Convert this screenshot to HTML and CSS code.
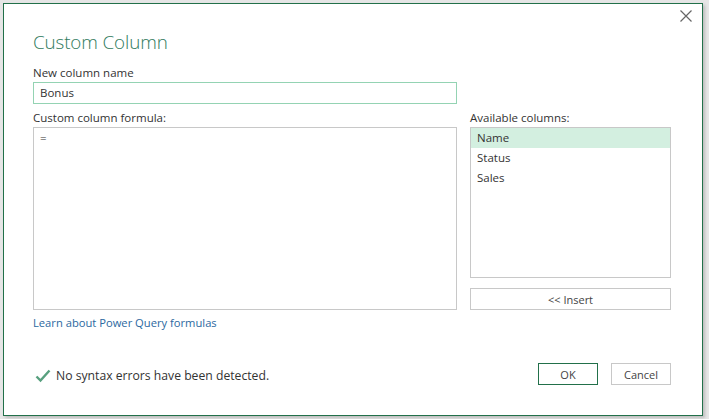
FILE: index.html
```html
<!DOCTYPE html>
<html>
<head>
<meta charset="utf-8">
<link rel="stylesheet" href="styles.css">
</head>
<body>
<div class="dialog">
  <button class="close" aria-label="Close">
    <svg width="12" height="12" viewBox="0 0 12 12"><path d="M0.5 0.5 L11.5 11.5 M11.5 0.5 L0.5 11.5" stroke="#666" stroke-width="1.2" fill="none"/></svg>
  </button>
  <h1 class="title">Custom Column</h1>
  <label class="label">New column name</label>
  <div class="name-input">Bonus</div>
  <div class="main">
    <div class="col-left">
      <label class="label">Custom column formula:</label>
      <div class="formula">=</div>
    </div>
    <div class="col-right">
      <label class="label">Available columns:</label>
      <ul class="list">
        <li class="selected">Name</li>
        <li>Status</li>
        <li>Sales</li>
      </ul>
      <button class="btn insert">&lt;&lt; Insert</button>
    </div>
  </div>
  <a class="link">Learn about Power Query formulas</a>
  <div class="footer">
    <div class="status">
      <svg width="16" height="14" viewBox="0 0 16 14"><path d="M1.5 7.5 L5.5 11.5 L14.5 1.5" stroke="#58a07f" stroke-width="2.4" fill="none"/></svg>
      <span>No syntax errors have been detected.</span>
    </div>
    <div class="buttons">
      <button class="btn ok">OK</button>
      <button class="btn">Cancel</button>
    </div>
  </div>
</div>
</body>
</html>
```

FILE: styles.css
```css
html, body {
  margin: 0;
  padding: 0;
}
body {
  background: #e6e6e6;
  padding: 3px;
  font-family: "Open Sans", "Noto Sans", sans-serif;
  color: #333;
}
.dialog {
  position: relative;
  box-sizing: border-box;
  width: 700px;
  height: 413px;
  background: #fff;
  border: 1px solid #22704a;
  box-shadow: 2px 2px 3px rgba(0,0,0,0.18);
  padding: 24px 30px 0 29px;
}
.close {
  position: absolute;
  top: 5px;
  right: 9px;
  width: 14px;
  height: 14px;
  padding: 0;
  border: 0;
  background: none;
  display: flex;
  align-items: center;
  justify-content: center;
}
.title {
  margin: 0;
  font-weight: 300;
  font-size: 18.8px;
  line-height: 28px;
  color: #2f7a5c;
  letter-spacing: -0.1px;
}
.label {
  display: block;
  font-size: 11.5px;
  line-height: 16px;
  color: #333;
}
.title + .label {
  margin-top: 9px;
}
.name-input {
  box-sizing: border-box;
  width: 424px;
  height: 22px;
  border: 1px solid #94d3b3;
  margin-top: 1px;
  padding: 0 6px;
  font-size: 11.5px;
  line-height: 20px;
}
.main {
  display: grid;
  grid-template-columns: 424px 201px;
  column-gap: 13px;
  margin-top: 6px;
}
.col-left, .col-right {
  display: flex;
  flex-direction: column;
}
.col-left .label, .col-right .label {
  margin-bottom: 1px;
}
.formula {
  box-sizing: border-box;
  height: 183px;
  border: 1px solid #c8c8c8;
  padding: 2px 6px;
  font-size: 11.5px;
  line-height: 16px;
}
.list {
  box-sizing: border-box;
  list-style: none;
  margin: 0;
  padding: 0;
  height: 151px;
  border: 1px solid #c8c8c8;
  font-size: 11.5px;
}
.list li {
  height: 20px;
  line-height: 20px;
  padding-left: 6px;
}
.list li.selected {
  background: #d3efe0;
}
.btn {
  box-sizing: border-box;
  height: 22px;
  border: 1px solid #c8c8c8;
  background: #fff;
  font-family: inherit;
  font-size: 11px;
  color: #444;
  padding: 0;
}
.insert {
  margin-top: 10px;
  width: 201px;
}
.link {
  display: block;
  margin-top: 4px;
  font-size: 11.2px;
  line-height: 18px;
  color: #2b68a0;
}
.footer {
  display: flex;
  justify-content: space-between;
  align-items: center;
  margin-top: 31px;
  width: 638px;
}
.status {
  display: flex;
  align-items: center;
  gap: 5px;
  padding-left: 2px;
  padding-top: 3px;
  font-size: 12.2px;
  color: #333;
}
.buttons {
  display: flex;
  gap: 13px;
}
.buttons .btn {
  width: 60px;
}
.ok {
  border-color: #22704a;
}
```
